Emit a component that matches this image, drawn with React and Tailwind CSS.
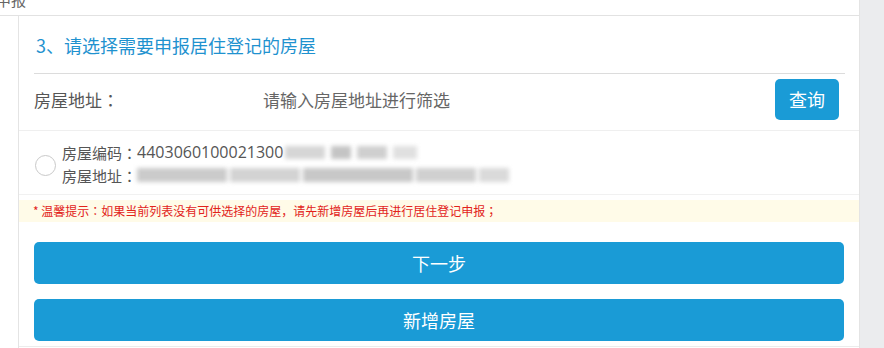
import React from 'react';

const font = { fontFamily: '"Microsoft YaHei", "Noto Sans CJK SC", "Noto Sans", sans-serif' };
const jp = { fontFamily: '"Noto Sans CJK JP", sans-serif' };

// centred full-width punctuation, as in the reference font
const P = ({ c }) => <span style={jp}>{c}</span>;

export default function App() {
  return (
    <div className="flex w-[884px] h-[348px] overflow-hidden bg-white" style={font}>
      <div className="w-[859px] flex flex-col">
        {/* header strip (cut off) */}
        <div className="h-[16px] border-b border-[#e2e2e2] overflow-hidden relative">
          <span className="absolute left-[-4px] top-[-11px] text-[15px] text-[#666]">申报</span>
        </div>

        <div className="ml-[18px] border-l border-[#e4e4e4] flex-1 flex flex-col">
          {/* title */}
          <div className="pl-[15px] pr-[14px]">
            <div className="h-[58px] flex items-center border-b border-[#dcdcdc] pt-[2px]">
              <span className="text-[18px] text-[#1f92cf] ml-[2px]">3、请选择需要申报居住登记的房屋</span>
            </div>
          </div>

          {/* search row */}
          <div className="pl-[15px] pr-[20px] h-[57px] pb-[5px] flex items-center border-b border-[#efefef]">
            <span className="w-[229px] text-[17px] text-[#555]">房屋地址<P c="：" /></span>
            <span className="flex-1 text-[17px] text-[#666]">请输入房屋地址进行筛选</span>
            <button className="w-[64px] h-[41px] rounded-[5px] bg-[#1a9bd6] text-white text-[18px]">查询</button>
          </div>

          {/* house item */}
          <div className="pl-[16px] h-[64px] flex items-center border-b border-[#f1f1f1]">
            <div className="w-[21px] h-[21px] rounded-full border border-[#c9c9c9] bg-white mt-[6px]" />
            <div className="ml-[6px] flex flex-col text-[15px] leading-[23px] text-[#555] mt-[2px]">
              <div className="flex items-center">
                <span>房屋编码<P c="：" /></span>
                <span className="text-[16px]" style={{ fontFamily: '"Open Sans", "Noto Sans", sans-serif' }}>4403060100021300</span>
                <div className="flex items-center gap-[6px] ml-[2px] blur-[2px]">
                  <div className="w-[40px] h-[13px] bg-[#d6d6d6]" />
                  <div className="w-[20px] h-[13px] bg-[#c4c4c4]" />
                  <div className="w-[30px] h-[13px] bg-[#cfcfcf]" />
                  <div className="w-[24px] h-[13px] bg-[#e0e0e0]" />
                </div>
              </div>
              <div className="flex items-center">
                <span>房屋地址<P c="：" /></span>
                <div className="flex items-center gap-[3px] blur-[2px]">
                  <div className="w-[90px] h-[14px] bg-[#cbcbcb]" />
                  <div className="w-[70px] h-[14px] bg-[#d3d3d3]" />
                  <div className="w-[110px] h-[14px] bg-[#c8c8c8]" />
                  <div className="w-[60px] h-[14px] bg-[#d0d0d0]" />
                  <div className="w-[30px] h-[14px] bg-[#dadada]" />
                </div>
              </div>
            </div>
          </div>

          {/* notice */}
          <div className="mt-[5px] h-[22px] bg-[#fffbe8] flex items-center pl-[14px]">
            <span className="text-[12px] text-[#e2231a]">
              * 温馨提示<P c="：" />如果当前列表没有可供选择的房屋<P c="，" />请先新增房屋后再进行居住登记申报<P c="；" />
            </span>
          </div>

          {/* buttons */}
          <div className="pl-[15px] pr-[15px] flex flex-col gap-[15px] mt-[20px]">
            <button className="h-[42px] rounded-[5px] bg-[#1a9bd6] text-white text-[18px]">下一步</button>
            <button className="h-[42px] rounded-[5px] bg-[#1a9bd6] text-white text-[18px]">新增房屋</button>
          </div>
          <div className="mt-[5px] border-b border-[#ececec]" />
        </div>
      </div>
      <div className="flex-1 bg-[#ebecee] border-l border-[#e4e4e4]" />
    </div>
  );
}
